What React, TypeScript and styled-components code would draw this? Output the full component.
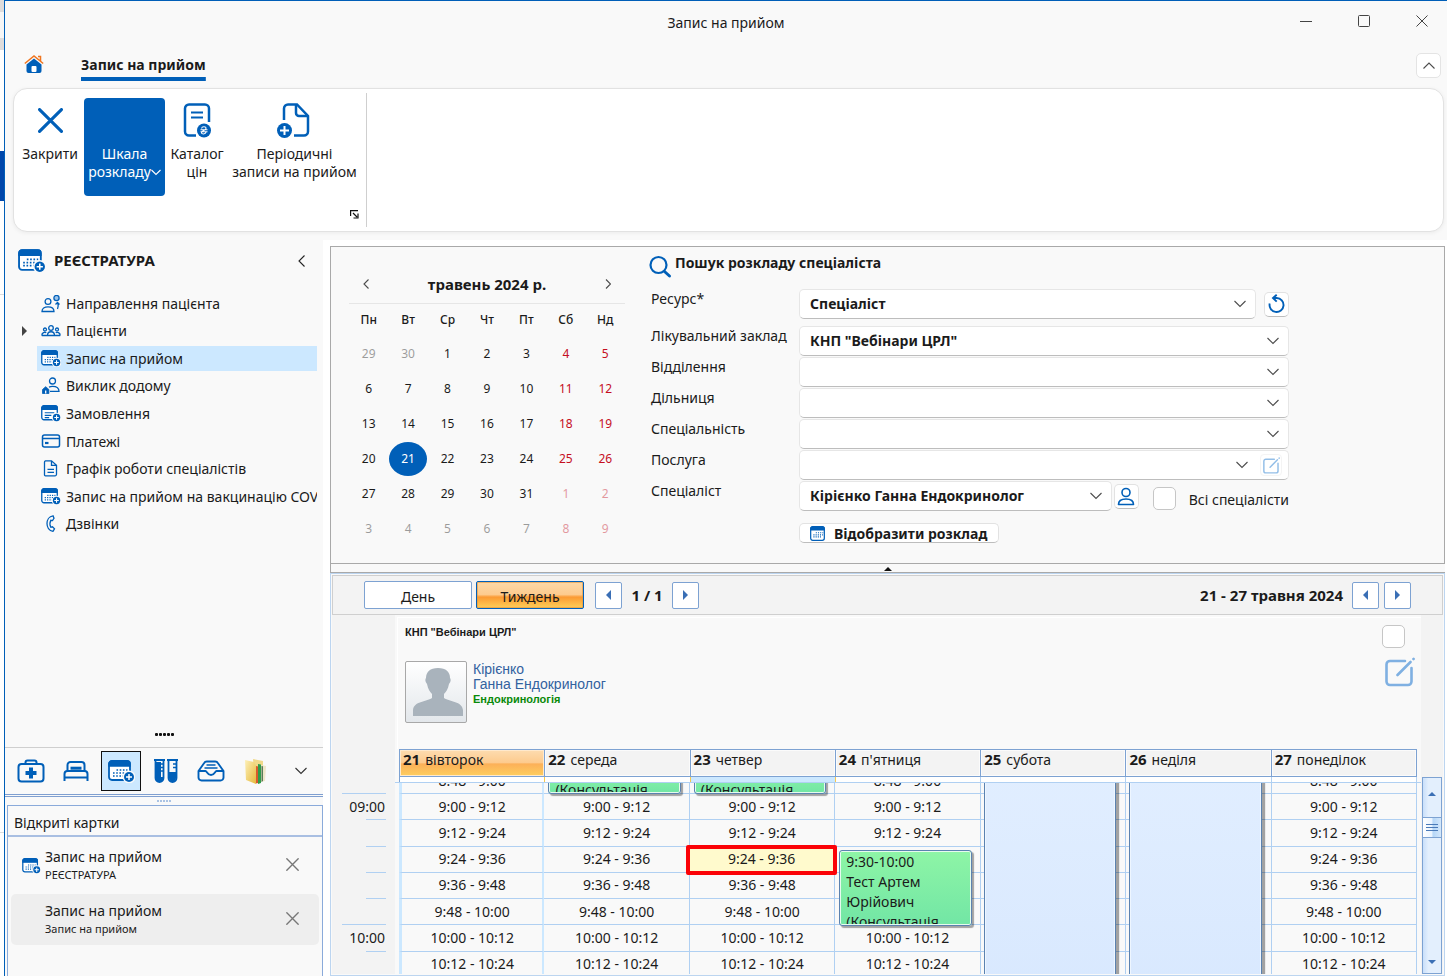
import React from 'react';
import styled, { createGlobalStyle, css } from 'styled-components';

const BLUE = '#005fb8';
const LINE = '#b0d0f2';
const EDGE = '#7da2d2';
const INK = '#1b1b1b';

const GlobalStyle = createGlobalStyle`
  * { box-sizing: border-box; }
  html, body, #root { height: 100%; }
  body {
    margin: 0;
    font-family: "Noto Sans", "Open Sans", sans-serif;
    font-size: 14px;
    line-height: 18px;
    color: ${INK};
    background: #fff;
    overflow: hidden;
  }
  button, select, input { font: inherit; color: inherit; margin: 0; }
  button { padding: 0; border: 0; background: none; cursor: pointer; }
  ul { list-style: none; margin: 0; padding: 0; }
  h1, h2, h3, p { margin: 0; font-size: inherit; font-weight: inherit; }
  table { border-spacing: 0; }
  th, td { padding: 0; }
  svg { display: block; flex: none; }
`;

/* ---------- shell ---------- */

const Desktop = styled.div`
  display: flex;
  height: 100vh;
  min-height: 900px;
`;

const DesktopEdge = styled.div`
  flex: none;
  width: 4px;
  background: linear-gradient(
    #dedcdc 0 12px, #f6f6f6 12px 38px, #dedcdc 38px 50px, #fff 50px 151px,
    #0047ab 151px 201px, #fff 201px 294px, #dcdcdc 294px 295px,
    #fff 295px 832px, #dcdcdc 832px 833px, #fff 833px
  );
`;

const Window = styled.div`
  flex: 1;
  min-width: 0;
  display: flex;
  flex-direction: column;
  background: #f9f9f9;
  border-left: 1px solid ${BLUE};
  border-top: 1px solid ${BLUE};
`;

const TitleBar = styled.header`
  flex: none;
  display: grid;
  grid-template-columns: 1fr auto 1fr;
  align-items: center;
  height: 42px;
`;

const WindowTitle = styled.h1`
  grid-column: 2;
  padding-top: 2px;
`;

const WindowControls = styled.div`
  display: flex;
  justify-content: flex-end;
  gap: 8px;
`;

const WindowButton = styled.button`
  display: grid;
  place-items: center;
  width: 50px;
  height: 34px;
  padding-bottom: 2px;
`;

const TabBar = styled.nav`
  flex: none;
  display: flex;
  align-items: center;
  height: 45px;
  padding: 0 6px 4px 19px;
`;

const Tab = styled.button`
  margin-left: 37px;
  margin-right: auto;
  padding: 9px 0 7px;
  font-weight: 700;
  background: linear-gradient(${BLUE}, ${BLUE}) bottom / 100% 4px no-repeat;
`;

const CollapseButton = styled.button`
  display: grid;
  place-items: center;
  width: 25px;
  height: 25px;
  margin-top: 4px;
  background: #fff;
  border: 1px solid #e4e4e4;
  border-radius: 5px;
`;

const Ribbon = styled.div`
  flex: none;
  display: flex;
  height: 144px;
  margin: 0 3px 0 8px;
  padding: 4px 6px;
  background: #fff;
  border: 1px solid #e2e2e2;
  border-radius: 14px;
  box-shadow: 0 1px 4px rgba(0, 0, 0, 0.06);
`;

const RibbonGroup = styled.div`
  display: flex;
  align-items: flex-start;
  padding: 5px 0 0;
  border-right: 1px solid #cfcfcf;
`;

const RibbonButton = styled.button<{ $width: number; $active?: boolean }>`
  display: flex;
  flex-direction: column;
  align-items: center;
  width: ${(p) => p.$width}px;
  height: 98px;
  padding-top: 2px;
  border-radius: 4px;
  text-align: center;
  ${(p) => p.$active && css`
    margin-left: 4px;
    background: ${BLUE};
    color: #fff;
  `}
`;

const RibbonIcon = styled.span`
  display: grid;
  place-items: center;
  height: 45px;
  padding-bottom: 4px;
`;

const RibbonLabel = styled.span`
  display: flex;
  align-items: center;
  white-space: nowrap;
`;

const Launcher = styled.button`
  align-self: flex-end;
  margin: 0 7px 8px -10px;
`;

const Body = styled.div`
  flex: 1;
  min-height: 0;
  display: flex;
  margin-top: 8px;
  background: #fff;
`;

/* ---------- sidebar ---------- */

const Sidebar = styled.aside`
  flex: none;
  display: flex;
  flex-direction: column;
  width: 318px;
  background: #f9f9f9;
`;

const SideHeader = styled.div`
  display: flex;
  align-items: center;
  height: 42px;
  padding: 0 18px 0 13px;
  gap: 8px;
`;

const SideTitle = styled.h2`
  flex: 1;
  padding-bottom: 3px;
  font-size: 15px;
  font-weight: 700;
`;

const SideList = styled.ul`
  display: grid;
  grid-template-columns: minmax(0, 1fr);
  grid-auto-rows: 1fr;
  height: 248px;
  margin-top: 8px;
`;

const SideItem = styled.li`
  display: flex;
  align-items: center;
  padding-right: 6px;
`;

const Expander = styled.span`
  display: flex;
  justify-content: center;
  flex: none;
  width: 32px;
  padding-right: 8px;
  padding-left: 15px;
`;

const SideLink = styled.a<{ $selected?: boolean }>`
  flex: 1;
  min-width: 0;
  display: flex;
  align-items: center;
  gap: 5px;
  height: 25px;
  padding-left: 4px;
  color: inherit;
  text-decoration: none;
  white-space: nowrap;
  overflow: hidden;
  background: ${(p) => (p.$selected ? '#cce8ff' : 'transparent')};
`;

const Dots = styled.div<{ $color: string; $size: number }>`
  display: flex;
  justify-content: center;
  gap: 1px;
  span {
    width: ${(p) => p.$size}px;
    height: ${(p) => p.$size}px;
    background: ${(p) => p.$color};
    border-radius: 1px;
  }
`;

const ModuleSplitter = styled.div`
  margin-top: auto;
  padding-bottom: 11px;
  border-bottom: 1px solid #cfcfcf;
`;

const ModuleBar = styled.div`
  flex: none;
  display: flex;
  align-items: center;
  gap: 5px;
  height: 46px;
  padding-left: 6px;
`;

const ModuleButton = styled.button<{ $selected?: boolean }>`
  display: grid;
  place-items: center;
  width: 40px;
  height: 40px;
  border: 1px solid ${(p) => (p.$selected ? '#111' : 'transparent')};
  background: ${(p) => (p.$selected ? '#cce8ff' : 'transparent')};
`;

const CardsSplitter = styled.div`
  flex: none;
  height: 11px;
  padding-top: 5px;
  border-top: 1px solid #7f9fd0;
  box-shadow: inset 0 1px 0 #f9f9f9, inset 0 2px 0 #7f9fd0;
`;

const Cards = styled.section`
  flex: none;
  height: 171px;
  margin: 0 0 0 2px;
  border: 1px solid #8aaada;
  border-bottom: 0;
`;

const CardsTitle = styled.h2`
  height: 31px;
  padding: 8px 6px 0;
  border-bottom: 2px solid #a9bfe2;
`;

const Card = styled.div<{ $active?: boolean }>`
  display: flex;
  align-items: center;
  height: 51px;
  margin: 3px;
  padding: 0 20px 0 11px;
  border-radius: 5px;
  background: ${(p) => (p.$active ? '#eeeeee' : 'transparent')};
`;

const CardIcon = styled.span`
  flex: none;
  width: 23px;
`;

const CardClose = styled.button`
  padding-bottom: 3px;
`;

const CardText = styled.span`
  flex: 1;
  display: flex;
  flex-direction: column;
  padding-top: 1px;
  small { font-size: 11px; }
`;

/* ---------- main ---------- */

const Main = styled.main`
  flex: 1;
  min-width: 0;
  display: flex;
  flex-direction: column;
  margin: 6px 2px 0 7px;
`;

const SearchPanel = styled.section`
  flex: none;
  display: flex;
  height: 318px;
  background: #f9f9f9;
  border: 1px solid #a9a9a9;
`;

const Calendar = styled.div`
  flex: none;
  width: 276px;
  margin: 24px 24px 0 18px;
`;

const CalendarHead = styled.div`
  display: flex;
  align-items: center;
  justify-content: space-between;
  height: 33px;
  padding: 0 14px 6px;
  border-bottom: 1px solid #e6e6e6;
  font-size: 15px;
  font-weight: 700;
`;

const CalendarTable = styled.table`
  width: 100%;
  table-layout: fixed;
  text-align: center;
  th { height: 32px; font-size: 12px; font-weight: 500; }
  td { height: 35px; }
`;

const DayButton = styled.button<{ $weekend: boolean; $faded: boolean; $selected: boolean }>`
  width: 38px;
  height: 34px;
  border-radius: 50%;
  font-size: 12px;
  color: ${(p) => (p.$weekend ? '#c50f1f' : INK)};
  ${(p) => p.$faded && css`opacity: 0.42;`}
  ${(p) => p.$selected && css`background: ${BLUE}; color: #fff;`}
`;

const Form = styled.form`
  flex: none;
  width: 640px;
`;

const FormTitle = styled.h2`
  display: flex;
  gap: 3px;
  height: 42px;
  padding-top: 8px;
  font-weight: 700;
`;

const FormTitleText = styled.span`
  height: 16px;
  line-height: 16px;
`;

const FieldRow = styled.div<{ $spaced?: boolean }>`
  display: flex;
  height: ${(p) => (p.$spaced ? 37 : 31)}px;
  padding-left: 2px;
`;

const FieldLabel = styled.label`
  flex: none;
  width: 148px;
  padding-top: 1px;
`;

const FieldBox = styled.div`
  display: flex;
  align-items: center;
  width: 490px;
  height: 30px;
`;

const SelectBox = styled.span`
  position: relative;
  flex: 1;
  height: 30px;
`;

const SelectInput = styled.select`
  appearance: none;
  display: block;
  width: 100%;
  height: 30px;
  padding: 0 30px 0 10px;
  font-weight: 700;
  background: #fff;
  border: 1px solid #e6e6e6;
  border-bottom: 1px solid #bdbdbd;
  border-radius: 5px;
`;

const SelectTools = styled.span`
  position: absolute;
  top: 4px;
  right: 7px;
  display: flex;
  align-items: center;
  gap: 12px;
  height: 22px;
  padding-right: 3px;
  pointer-events: none;
`;

const IconButton = styled.button<{ $gap?: number }>`
  display: grid;
  place-items: center;
  flex: none;
  width: 25px;
  height: 25px;
  margin-left: ${(p) => p.$gap ?? 0}px;
  background: #fff;
  border: 1px solid #e2e2e2;
  border-bottom-color: #bdbdbd;
  border-radius: 5px;
`;

const InnerEdit = styled.button`
  display: grid;
  place-items: center;
  width: 22px;
  height: 22px;
  margin-right: -3px;
  border: 1px solid #f4f4f4;
  border-radius: 4px;
`;

const Check = styled.input`
  appearance: none;
  flex: none;
  width: 23px;
  height: 23px;
  background: #fff;
  border: 1px solid #c6c6c6;
  border-radius: 5px;
  &:checked { background: ${BLUE}; }
`;

const CheckLabel = styled.label`
  display: flex;
  align-items: flex-start;
  gap: 13px;
  margin-left: 14px;
  padding-top: 4px;
  white-space: nowrap;
`;

const CheckText = styled.span`
  padding-top: 4px;
`;

const ShowButton = styled.button`
  display: flex;
  align-items: center;
  gap: 9px;
  height: 20px;
  width: 200px;
  margin: 11px 0 0 150px;
  padding: 1px 9px 0 10px;
  font-weight: 700;
  white-space: nowrap;
  background: #fff;
  border: 1px solid #e2e2e2;
  border-bottom-color: #bdbdbd;
  border-radius: 5px;
`;

const PanelSplitter = styled.button`
  flex: none;
  display: grid;
  place-items: center;
  height: 9px;
  background: #f9f9f9;
  border-left: 1px solid #a9a9a9;
  border-bottom: 1px solid #a9a9a9;
`;

const Schedule = styled.section`
  flex: 1;
  min-height: 0;
  display: flex;
  flex-direction: column;
  padding: 1px;
  border: 1px solid #bcd5f0;
  background: #f9f9f9;
`;

const ScheduleBar = styled.div`
  flex: none;
  display: flex;
  align-items: center;
  height: 40px;
  padding: 0 31px 0 31px;
  background: #f3f3f3;
  border: 1px solid #cfcfcf;
`;

const ViewButton = styled.button<{ $active?: boolean }>`
  width: 108px;
  height: 28px;
  margin-right: 4px;
  padding-top: 3px;
  background: #fff;
  border: 1px solid ${EDGE};
  border-radius: 2px;
  ${(p) => p.$active && css`
    border-color: ${BLUE};
    background: linear-gradient(#fcd9a8 0, #fdcb8e 48%, #fb9a33 58%, #fdc34f 90%, #fcc95e 100%);
    box-shadow: inset 0 0 0 1px rgba(226, 150, 60, 0.6);
  `}
`;

const ArrowButton = styled.button<{ $gap?: number }>`
  display: grid;
  place-items: center;
  width: 27px;
  height: 27px;
  margin-left: ${(p) => p.$gap ?? 0}px;
  background: #fff;
  border: 1px solid ${EDGE};
  border-radius: 2px;
`;

const PageInfo = styled.span`
  width: 50px;
  text-align: center;
  font-size: 15px;
  font-weight: 700;
`;

const RangeText = styled.span`
  margin-left: auto;
  font-size: 15px;
  font-weight: 700;
`;

const Area = styled.div`
  flex: 1;
  min-height: 0;
  display: flex;
`;

const Gutter = styled.div`
  flex: none;
  display: flex;
  flex-direction: column;
  width: 63px;
  background: #f3f3f3;
  padding-top: 168px;
`;

const Clip = styled.div`
  flex: 1;
  min-height: 0;
  overflow: hidden;
`;

const Ruler = styled.ol`
  display: grid;
  grid-template-rows: repeat(9, 1fr);
  height: 236px;
  margin: -15px 9px 0 10px;
  padding: 0;
  list-style: none;
`;

const Tick = styled.li<{ $major?: boolean }>`
  display: flex;
  align-items: center;
  justify-content: flex-end;
  padding-right: 1px;
  background: linear-gradient(${LINE}, ${LINE}) right bottom / ${(p) => (p.$major ? '44px' : '20px')} 1px no-repeat;
`;

const Content = styled.div`
  flex: 1;
  min-width: 0;
  display: flex;
  flex-direction: column;
`;

const Resource = styled.div`
  flex: none;
  display: flex;
  justify-content: space-between;
  height: 132px;
  margin: 2px 0 0 2px;
  padding: 7px 3px 0 7px;
  font-family: "Liberation Sans", Arial, sans-serif;
  border-top: 1px solid #fff;
  border-left: 1px solid #fff;
`;

const Clinic = styled.h3`
  font-size: 11px;
  line-height: 14px;
  font-weight: 700;
`;

const Person = styled.div`
  display: flex;
  gap: 6px;
  margin-top: 22px;
`;

const Avatar = styled.div`
  width: 62px;
  height: 62px;
  border: 1px solid #a8a8a8;
  border-radius: 2px;
  background: linear-gradient(#fff, #e3e7eb);
`;

const PersonText = styled.div`
  padding-top: 1px;
  font-size: 14px;
  line-height: 15px;
  color: #33629f;
  strong {
    display: block;
    font-size: 11px;
    color: #0a8a0a;
  }
`;

const ResourceTools = styled.div`
  display: flex;
  flex-direction: column;
  gap: 9px;
  align-items: flex-start;
  width: 36px;
`;

const ResourceEdit = styled.button`
  margin-left: 3px;
`;

const HeadTable = styled.table`
  flex: none;
  table-layout: fixed;
  width: calc(100% - 8px);
  margin: 0 4px;
  border-left: 1px solid ${EDGE};
`;

const HeadCell = styled.th<{ $today?: boolean }>`
  height: 28px;
  padding: 0 0 7px 3px;
  text-align: left;
  font-weight: 400;
  white-space: nowrap;
  border: 1px solid ${EDGE};
  border-left: 0;
  background: ${(p) => (p.$today
    ? 'linear-gradient(#fddcb0 0, #fdcb8e 48%, #fcb058 54%, #fdce60 100%)'
    : '#f3f3f3')};
  box-shadow: inset 0 0 0 1px ${(p) => (p.$today ? '#ffe9cc' : '#fbfbfb')};
  b { margin-right: 5px; font-size: 15px; }
`;

const AllDay = styled.td<{ $mark?: boolean; $fill?: boolean }>`
  height: 5px;
  border-right: 1px solid ${(p) => (p.$mark ? '#f7c84e' : LINE)};
  background: ${(p) => (p.$fill ? '#cce8ff' : '#fff')};
`;

const SlotClip = styled(Clip)`
  border-top: 1px solid ${LINE};
`;

const SlotTable = styled.table`
  table-layout: fixed;
  width: calc(100% - 8px);
  height: 236px;
  margin: -15px 4px 0;
`;

const Slot = styled.td<{ $day: number }>`
  position: relative;
  text-align: center;
  border-bottom: 1px solid ${LINE};
  border-right: 1px solid ${LINE};
  ${(p) => p.$day === 0 && css`
    border-left: 3px solid #cce8ff;
    border-right: 2px solid #cce8ff;
  `}
`;

const Event = styled.div<{ $top: number; $height: number; $pad?: number }>`
  position: absolute;
  z-index: 1;
  top: ${(p) => p.$top}px;
  left: 4px;
  right: 8px;
  height: ${(p) => p.$height}px;
  padding: ${(p) => p.$pad ?? 1}px 0 1px 6px;
  text-align: left;
  line-height: 20px;
  border: 1px solid #5b82b0;
  border-radius: 3px;
  background: linear-gradient(#8ef5a6, #72e6a5);
  box-shadow: inset 0 0 0 1px #e6fbee, 2px 2px 1px rgba(0, 0, 0, 0.35);
`;

const EventText = styled.div`
  height: 100%;
  overflow: hidden;
`;

const Busy = styled.div`
  position: absolute;
  z-index: 1;
  top: 0;
  left: 3px;
  right: 9px;
  height: 236px;
  border: 1px solid #5b82b0;
  background: linear-gradient(#e1eeff, #d8e8fe);
  box-shadow: inset 0 0 0 1px #eef6ff, 3px 2px 1px rgba(0, 0, 0, 0.35);
`;

const Marked = styled.div`
  position: absolute;
  z-index: 2;
  inset: -2px -3px -3px -4px;
  display: grid;
  place-items: center;
  padding-bottom: 1px;
  border: 4px solid #fb0207;
  border-radius: 2px;
  background: #fffacd;
`;

const ScrollColumn = styled.div`
  flex: none;
  width: 22px;
  padding: 162px 1px 0 1px;
  display: flex;
  background: #f3f3f3;
`;

const ScrollTrack = styled.div`
  flex: 1;
  display: flex;
  flex-direction: column;
  align-items: center;
  border: 1px solid ${EDGE};
  background: linear-gradient(90deg, #c9dffa, #e3effd 30%);
`;

const ScrollArrow = styled.button<{ $down?: boolean }>`
  flex: none;
  display: flex;
  align-items: center;
  justify-content: center;
  width: 100%;
  height: ${(p) => (p.$down ? 22 : 39)}px;
  padding-bottom: ${(p) => (p.$down ? 0 : 9)}px;
  margin-top: ${(p) => (p.$down ? 'auto' : 0)};
`;

const ScrollThumb = styled.div`
  flex: none;
  display: grid;
  place-items: center;
  width: 100%;
  height: 21px;
  border: solid ${EDGE};
  border-width: 1px 0;
  background: linear-gradient(90deg, #fff, #eaf4ff 50%, #b5d6f7 55%, #d3e7fb);
`;

/* ---------- icons ---------- */

const Plus = ({ x, y, r }: { x: number; y: number; r: number }) => (
  <g>
    <circle cx={x} cy={y} r={r + 1.5} fill="#f9f9f9" />
    <circle cx={x} cy={y} r={r} fill={BLUE} />
    <path d={`M${x - r * 0.6} ${y}h${r * 1.2}M${x} ${y - r * 0.6}v${r * 1.2}`} stroke="#fff" strokeWidth="1.5" />
  </g>
);

const CalendarIcon = ({ size, plain, lines }: { size: number; plain?: boolean; lines?: boolean }) => (
  <svg width={size} height={plain ? size : Math.round(size * 0.86)} viewBox={plain ? '0 0 22 22' : '0 0 27 23'} fill="none">
    <rect x="1" y="1" width={plain ? 20 : 21} height={plain ? 20 : 19} rx="3" stroke={BLUE} strokeWidth="1.8" fill="#fff" />
    <path d={plain ? 'M1 6V4a3 3 0 0 1 3-3h14a3 3 0 0 1 3 3v2z' : 'M1 6V4a3 3 0 0 1 3-3h15a3 3 0 0 1 3 3v2z'} fill={BLUE} stroke={BLUE} strokeWidth="1.5" />
    {lines ? (
      <path d="M5 10.500h13M5 14h9M5 17h6" stroke={BLUE} strokeWidth="1.600" />
    ) : (
      <path d="M8.500 10h11M5 13h14M5 16h11" stroke={BLUE} strokeWidth="1.600" strokeDasharray="1.600 1.600" />
    )}
    {!plain && <Plus x={21} y={17} r={5} />}
  </svg>
);

const Chevron = ({ dir = 'down', w = 12, color = '#4c4c4c' }: { dir?: 'down' | 'up' | 'left' | 'right'; w?: number; color?: string }) => {
  const d = {
    down: `M.5 1l${w / 2 - 0.5} ${w / 2 - 0.5}L${w - 0.5} 1`,
    up: `M.5 ${w / 2 + 0.5}L${w / 2} 1l${w / 2 - 0.5} ${w / 2 - 0.5}`,
    left: `M${w / 2 + 0.5} .5L1 ${w / 2}l${w / 2 - 0.5} ${w / 2 - 0.5}`,
    right: `M1 .5l${w / 2 - 0.5} ${w / 2 - 0.5}L1 ${w - 0.5}`,
  }[dir];
  const wide = dir === 'down' || dir === 'up';
  return (
    <svg width={wide ? w : w / 2 + 1} height={wide ? w / 2 + 2 : w} fill="none" stroke={color} strokeWidth="1.1">
      <path d={d} />
    </svg>
  );
};

const Triangle = ({ dir, color = '#3a6fb5' }: { dir: 'left' | 'right' | 'up' | 'down'; color?: string }) => {
  const d = { left: 'M6 0v10L1 5z', right: 'M1 0v10l5-5z', up: 'M0 5l4-4 4 4z', down: 'M0 0h8L4 4z' }[dir];
  const tall = dir === 'left' || dir === 'right';
  return (
    <svg width={tall ? 7 : 8} height={tall ? 10 : 5} fill={color}>
      <path d={d} />
    </svg>
  );
};

const CloseIcon = ({ size, width, color }: { size: number; width: number; color: string }) => (
  <svg width={size} height={size} viewBox="0 0 24 24" fill="none" stroke={color} strokeWidth={width} strokeLinecap="round">
    <path d="M1.500 1.500l21 21M22.500 1.500l-21 21" />
  </svg>
);

const HomeIcon = () => (
  <svg width="20" height="18" viewBox="0 0 20 18" fill="none">
    <path d="M2.500 9.500L10 3.500l7.500 6V16a2 2 0 0 1-2 2h-11a2 2 0 0 1-2-2z" fill={BLUE} />
    <rect x="7.500" y="11" width="5" height="6" rx="1" fill="#fff" />
    <path d="M.8 8.500L10 1l9.200 7.500M14 1.500h2.500V6" stroke="#f0751f" strokeWidth="1.500" />
  </svg>
);

const CatalogIcon = () => (
  <svg width="30" height="35" viewBox="0 0 30 35" fill="none" stroke={BLUE}>
    <path d="M14 32.500H7a4 4 0 0 1-4-4v-23a4 4 0 0 1 4-4h16a4 4 0 0 1 4 4V19" strokeWidth="2.500" />
    <path d="M9 9.500h12M9 14.500h12" strokeWidth="2" />
    <circle cx="22" cy="27.500" r="7" fill={BLUE} stroke="none" />
    <path d="M19.500 25.500c.5-2.500 4.700-2.300 4.500 0-.2 2-4.500 2-4.500 4 0 2 4 2 4.500-.3M18.500 26.700h7M18.500 28.700h7" stroke="#fff" strokeWidth="1.100" />
  </svg>
);

const PeriodicIcon = () => (
  <svg width="38" height="36" viewBox="0 0 38 36" fill="none" stroke={BLUE} strokeWidth="2.500">
    <path d="M8 17V5.500a4 4 0 0 1 4-4h9L32 13v15.500a4 4 0 0 1-4 4H18" />
    <path d="M20 2v8a3 3 0 0 0 3 3h8.500" />
    <circle cx="8.500" cy="27.500" r="7.500" fill={BLUE} stroke="none" />
    <path d="M4 27.500h9M8.500 23v9" stroke="#fff" strokeWidth="2" />
  </svg>
);

const LauncherIcon = () => (
  <svg width="9" height="9" fill="none" stroke="#111" strokeWidth="1.200">
    <path d="M.6 6V.6H8M3 3l4 4M8 3.500V8H3.500" />
  </svg>
);

const SmallIcon = ({ children }: { children: React.ReactNode }) => (
  <svg width="20" height="18" viewBox="0 0 20 18" fill="none" stroke={BLUE} strokeWidth="1.300">
    {children}
  </svg>
);

const ReferralIcon = () => (
  <SmallIcon>
    <circle cx="7" cy="6.500" r="2.900" />
    <path d="M1 16.500c0-3 2.500-4.700 6-4.700s6 1.700 6 4.700zM16.500 14c1-2 1-3.500.3-6M14.500 9.500l2-2 2 2" />
    <circle cx="15.500" cy="3" r="2.600" fill="#9cc4ea" />
  </SmallIcon>
);

const GroupIcon = () => (
  <SmallIcon>
    <circle cx="10" cy="6" r="2.300" />
    <circle cx="4" cy="7.500" r="1.500" />
    <circle cx="16" cy="7.500" r="1.500" />
    <path d="M6.500 13.500c0-5 7-5 7 0zM.8 13.500c0-3 3-3.800 4.500-2.700M.8 13.500h18.400M19.200 13.500c0-3-3-3.800-4.500-2.700" />
  </SmallIcon>
);

const HomeVisitIcon = () => (
  <SmallIcon>
    <circle cx="11.500" cy="4" r="3" />
    <path d="M9 14.300h9c0-3.500-3-5-6.500-5-1.500 0-2.500.3-3.500.8" />
    <path d="M1.500 12.500l3.200-2.800 3.200 2.800V16.500H1.500z" fill={BLUE} strokeWidth=".8" />
    <path d="M4.700 13.500v3" stroke="#fff" />
  </SmallIcon>
);

const CardPayIcon = () => (
  <SmallIcon>
    <rect x="1.500" y="2" width="17" height="12" rx="2" strokeWidth="1.500" />
    <path d="M1.500 5.500h17" strokeWidth="1.500" />
    <path d="M4 10h3.500" strokeWidth="2.200" />
  </SmallIcon>
);

const DocIcon = () => (
  <SmallIcon>
    <path d="M4.500 .8h6l5 4.500v9a1.500 1.500 0 0 1-1.500 1.500H4.500A1 1 0 0 1 3.500 14.500V2.300a1.500 1.500 0 0 1 1-1.500zM10.500 .8V5.300h5M6.500 9.300h6.500M6.500 12.300h6.500" />
  </SmallIcon>
);

const PhoneIcon = () => (
  <SmallIcon>
    <path d="M12 .8c-8 1-8 14.500 0 15.500l1.500-2.500-2-2-1.700.5c-1-2-1-5 0-7l1.700.3L13 3.300z" />
  </SmallIcon>
);

const MedkitIcon = () => (
  <svg width="28" height="24" viewBox="0 0 28 24" fill="none" stroke={BLUE} strokeWidth="2">
    <rect x="1.500" y="5" width="25" height="17.500" rx="3" />
    <path d="M8.500 5V3.500a2 2 0 0 1 2-2h7a2 2 0 0 1 2 2V5" />
    <path d="M14 8.500v11M8.500 14h11" strokeWidth="4" />
  </svg>
);

const BedIcon = () => (
  <svg width="26" height="22" viewBox="0 0 26 22" fill="none" stroke={BLUE} strokeWidth="2">
    <path d="M1.500 21v-7a3 3 0 0 1 3-3h17a3 3 0 0 1 3 3v7M1.500 17.500h23" />
    <path d="M4.500 11V5a3 3 0 0 1 3-3h11a3 3 0 0 1 3 3v6" />
    <path d="M7.500 8.200h11" strokeWidth="3" />
  </svg>
);

const TubesIcon = () => (
  <svg width="26" height="26" viewBox="0 0 26 26" fill="none" stroke={BLUE} strokeWidth="1.800">
    <path d="M1 2h11M2.500 2v18a4 4 0 0 0 8 0V2M14 2h11M15.500 2v18a4 4 0 0 0 8 0V2" />
    <path d="M3 4h5v18H5l-2-2zM16 14h7v6a3.500 3.500 0 0 1-7 0z" fill={BLUE} stroke="none" />
    <path d="M10 6H7M10 9.500H7M10 13H7M23 6h-3M23 9.500h-3" strokeWidth="1.500" />
    <path d="M3 21h7" strokeWidth="4" />
  </svg>
);

const InboxIcon = () => (
  <svg width="28" height="22" viewBox="0 0 28 22" fill="none" stroke={BLUE} strokeWidth="1.900">
    <path d="M1.500 11L7 3.200A3.500 3.500 0 0 1 9.800 1.500h8.400A3.500 3.500 0 0 1 21 3.200L26.500 11v6.500a3 3 0 0 1-3 3h-19a3 3 0 0 1-3-3zM1.500 11h7c1.500 0 1.500 4 5.500 4s4-4 5.500-4h7" />
    <path d="M9.500 5h9M7.500 8h13" strokeWidth="1.500" />
  </svg>
);

const FolderIcon = () => (
  <svg width="24" height="27" viewBox="0 0 24 27">
    <defs>
      <linearGradient id="folder" x1="0" y1="0" x2="1" y2="1">
        <stop offset="0" stopColor="#fdf0b8" />
        <stop offset="1" stopColor="#e6b93c" />
      </linearGradient>
    </defs>
    <path d="M9 1l10 2v20l-8 1z" fill="#f0d98a" />
    <path d="M17 7l5 1-1 15-5 1z" fill="#eee6c8" />
    <path d="M14 6l3 .5V25l-3 1z" fill="#2f9c4a" />
    <path d="M12 8l2 .5V25l-2 .5z" fill="#d85a2c" />
    <path d="M17.500 8l1.500.3V23l-1.500 1z" fill="#5a7a5a" />
    <path d="M1 2l9 2 2 4v18l-10-4z" fill="url(#folder)" />
  </svg>
);

const SearchIcon = () => (
  <svg width="23" height="24" viewBox="0 0 23 24" fill="none" stroke={BLUE}>
    <circle cx="9.500" cy="10" r="8" strokeWidth="2.200" />
    <path d="M15.500 16.500l5 4.500" strokeWidth="3" strokeLinecap="round" />
  </svg>
);

const ResetIcon = () => (
  <svg width="18" height="20" viewBox="0 0 18 20" fill="none" stroke={BLUE} strokeWidth="1.900">
    <path d="M1.700 9.500a7 7 0 1 0 7-5.500H5.500" />
    <path d="M8.700 .8L5 4l3.700 3.600" />
  </svg>
);

const UserIcon = () => (
  <svg width="18" height="19" viewBox="0 0 18 19" fill="none" stroke={BLUE} strokeWidth="1.600">
    <circle cx="9" cy="5.500" r="4" />
    <path d="M1.500 17.500c0-4 3-5.500 7.500-5.500s7.500 1.500 7.500 5.500z" strokeLinejoin="round" />
  </svg>
);

const EditIcon = ({ size, color }: { size: number; color: string }) => (
  <svg width={size} height={size} viewBox="0 0 30 30" fill="none" stroke={color} strokeWidth="2.600" strokeLinecap="round">
    <path d="M20 4H5a3.500 3.500 0 0 0-3.500 3.500v17A3.500 3.500 0 0 0 5 28h18a3.500 3.500 0 0 0 3.500-3.500V11" />
    <path d="M12.500 18L25.500 5M28.500 2l.1-.1" />
  </svg>
);

const Silhouette = () => (
  <svg width="60" height="60" viewBox="0 0 60 60" fill="#a9b3bc">
    <path d="M32 6c8 0 12 4 12 10 1 1 1 4-1 6-1 5-3 8-5 10v4c6 4 18 3 19 12v6H7v-6c1-9 13-8 19-12v-4c-2-2-4-5-5-10-2-2-2-5-1-6 0-6 4-10 12-10z" />
  </svg>
);

/* ---------- data ---------- */

const NAV = [
  { text: 'Направлення пацієнта', icon: <ReferralIcon /> },
  { text: 'Пацієнти', icon: <GroupIcon />, expandable: true },
  { text: 'Запис на прийом', icon: <CalendarIcon size={20} />, selected: true },
  { text: 'Виклик додому', icon: <HomeVisitIcon /> },
  { text: 'Замовлення', icon: <CalendarIcon size={20} lines /> },
  { text: 'Платежі', icon: <CardPayIcon /> },
  { text: 'Графік роботи спеціалістів', icon: <DocIcon /> },
  { text: 'Запис на прийом на вакцинацію COVID', icon: <CalendarIcon size={20} /> },
  { text: 'Дзвінки', icon: <PhoneIcon /> },
];

const MODULES = [
  { name: 'Медична допомога', icon: <MedkitIcon /> },
  { name: 'Стаціонар', icon: <BedIcon /> },
  { name: 'Реєстратура', icon: <CalendarIcon size={27} />, selected: true },
  { name: 'Лабораторія', icon: <TubesIcon /> },
  { name: 'Архів', icon: <InboxIcon /> },
  { name: 'Документи', icon: <FolderIcon /> },
  { name: 'Інші модулі', icon: <Chevron color="#333" /> },
];

const WEEKDAYS = ['Пн', 'Вт', 'Ср', 'Чт', 'Пт', 'Сб', 'Нд'];
const WEEKS = Array.from({ length: 6 }, (_, w) =>
  Array.from({ length: 7 }, (_, d) => {
    const n = w * 7 + d - 1;
    if (n < 1) return { day: n + 30, faded: true };
    if (n > 31) return { day: n - 31, faded: true };
    return { day: n, faded: false };
  }),
);

const DAYS = ['вівторок', 'середа', 'четвер', "п'ятниця", 'субота', 'неділя', 'понеділок'];
const SLOTS = [
  '8:48 - 9:00', '9:00 - 9:12', '9:12 - 9:24', '9:24 - 9:36', '9:36 - 9:48',
  '9:48 - 10:00', '10:00 - 10:12', '10:12 - 10:24', '10:24 - 10:36',
];
const FIELDS = [
  { id: 'clinic', label: 'Лікувальний заклад', value: 'КНП "Вебінари ЦРЛ"' },
  { id: 'department', label: 'Відділення', value: '' },
  { id: 'district', label: 'Дільниця', value: '' },
  { id: 'speciality', label: 'Спеціальність', value: '' },
];

/* ---------- pieces ---------- */

const Select = ({ id, value, edit }: { id: string; value: string; edit?: boolean }) => (
  <SelectBox>
    <SelectInput id={id} defaultValue={value}>
      <option value={value}>{value}</option>
    </SelectInput>
    <SelectTools>
      <Chevron />
      {edit && (
        <InnerEdit type="button" aria-label="Редагувати послугу">
          <EditIcon size={17} color="#94bfe8" />
        </InnerEdit>
      )}
    </SelectTools>
  </SelectBox>
);

const FiveDots = ({ color, size }: { color: string; size: number }) => (
  <Dots $color={color} $size={size}>
    <span /><span /><span /><span /><span />
  </Dots>
);

const SlotCell = ({ row, day }: { row: number; day: number }) => {
  const busy = day === 4 || day === 5;
  const booked = (row === 0 && (day === 1 || day === 2)) || (day === 3 && row > 2 && row < 6);
  const marked = day === 2 && row === 3;
  return (
    <Slot $day={day}>
      {!busy && !booked && !marked && SLOTS[row]}
      {busy && row === 0 && <Busy />}
      {booked && row === 0 && (
        <Event $top={0} $height={26} $pad={11}><EventText>(Консультація</EventText></Event>
      )}
      {day === 3 && row === 3 && (
        <Event $top={3} $height={76}>
          <EventText>9:30-10:00<br />Тест Артем<br />Юрійович<br />(Консультація</EventText>
        </Event>
      )}
      {marked && <Marked>{SLOTS[row]}</Marked>}
    </Slot>
  );
};

export default function App() {
  return (
    <Desktop>
      <GlobalStyle />
      <DesktopEdge />
      <Window>
        <TitleBar>
          <WindowTitle>Запис на прийом</WindowTitle>
          <WindowControls>
            <WindowButton aria-label="Згорнути">
              <svg width="12" height="12" stroke="#444"><path d="M0 6.500h12" /></svg>
            </WindowButton>
            <WindowButton aria-label="Розгорнути">
              <svg width="12" height="12" fill="none" stroke="#444"><rect x=".5" y=".5" width="11" height="11" rx="1" /></svg>
            </WindowButton>
            <WindowButton aria-label="Закрити вікно"><CloseIcon size={12} width={2} color="#444" /></WindowButton>
          </WindowControls>
        </TitleBar>

        <TabBar>
          <button aria-label="Головна"><HomeIcon /></button>
          <Tab>Запис на прийом</Tab>
          <CollapseButton aria-label="Згорнути стрічку"><Chevron dir="up" /></CollapseButton>
        </TabBar>

        <Ribbon>
          <RibbonGroup>
            <RibbonButton $width={60}>
              <RibbonIcon><CloseIcon size={25} width={3} color={BLUE} /></RibbonIcon>
              <RibbonLabel>Закрити</RibbonLabel>
            </RibbonButton>
            <RibbonButton $width={81} $active>
              <RibbonIcon />
              <RibbonLabel>Шкала</RibbonLabel>
              <RibbonLabel>розкладу<Chevron w={10} color="#fff" /></RibbonLabel>
            </RibbonButton>
            <RibbonButton $width={64}>
              <RibbonIcon><CatalogIcon /></RibbonIcon>
              <RibbonLabel>Каталог</RibbonLabel>
              <RibbonLabel>цін</RibbonLabel>
            </RibbonButton>
            <RibbonButton $width={131}>
              <RibbonIcon><PeriodicIcon /></RibbonIcon>
              <RibbonLabel>Періодичні</RibbonLabel>
              <RibbonLabel>записи на прийом</RibbonLabel>
            </RibbonButton>
            <Launcher aria-label="Параметри групи"><LauncherIcon /></Launcher>
          </RibbonGroup>
        </Ribbon>

        <Body>
          <Sidebar>
            <SideHeader>
              <CalendarIcon size={28} />
              <SideTitle>РЕЄСТРАТУРА</SideTitle>
              <button aria-label="Згорнути панель"><Chevron dir="left" color="#222" /></button>
            </SideHeader>
            <SideList>
              {NAV.map((item) => (
                <SideItem key={item.text}>
                  <Expander>{item.expandable && <Triangle dir="right" color="#444" />}</Expander>
                  <SideLink href="#" $selected={item.selected}>
                    {item.icon}
                    {item.text}
                  </SideLink>
                </SideItem>
              ))}
            </SideList>
            <ModuleSplitter><FiveDots color="#111" size={3} /></ModuleSplitter>
            <ModuleBar>
              {MODULES.map((m) => (
                <ModuleButton key={m.name} aria-label={m.name} $selected={m.selected}>{m.icon}</ModuleButton>
              ))}
            </ModuleBar>
            <CardsSplitter><FiveDots color="#8fb0dc" size={2} /></CardsSplitter>
            <Cards>
              <CardsTitle>Відкриті картки</CardsTitle>
              <Card>
                <CardIcon><CalendarIcon size={19} /></CardIcon>
                <CardText>Запис на прийом<small>РЕЄСТРАТУРА</small></CardText>
                <CardClose aria-label="Закрити картку"><CloseIcon size={13} width={2.5} color="#777" /></CardClose>
              </Card>
              <Card $active>
                <CardIcon />
                <CardText>Запис на прийом<small>Запис на прийом</small></CardText>
                <CardClose aria-label="Закрити картку"><CloseIcon size={13} width={2.5} color="#777" /></CardClose>
              </Card>
            </Cards>
          </Sidebar>

          <Main>
            <SearchPanel>
              <Calendar>
                <CalendarHead>
                  <button aria-label="Попередній місяць"><Chevron dir="left" w={10} /></button>
                  <span>травень 2024 р.</span>
                  <button aria-label="Наступний місяць"><Chevron dir="right" w={10} /></button>
                </CalendarHead>
                <CalendarTable>
                  <thead>
                    <tr>{WEEKDAYS.map((d) => <th key={d}>{d}</th>)}</tr>
                  </thead>
                  <tbody>
                    {WEEKS.map((week, w) => (
                      <tr key={w}>
                        {week.map((c, d) => (
                          <td key={d}>
                            <DayButton $weekend={d > 4} $faded={c.faded} $selected={!c.faded && c.day === 21}>{c.day}</DayButton>
                          </td>
                        ))}
                      </tr>
                    ))}
                  </tbody>
                </CalendarTable>
              </Calendar>

              <Form>
                <FormTitle><SearchIcon /><FormTitleText>Пошук розкладу спеціаліста</FormTitleText></FormTitle>
                <FieldRow $spaced>
                  <FieldLabel htmlFor="resource">Ресурс*</FieldLabel>
                  <FieldBox>
                    <Select id="resource" value="Спеціаліст" />
                    <IconButton type="button" aria-label="Скинути" $gap={8}><ResetIcon /></IconButton>
                  </FieldBox>
                </FieldRow>
                {FIELDS.map((f) => (
                  <FieldRow key={f.id}>
                    <FieldLabel htmlFor={f.id}>{f.label}</FieldLabel>
                    <FieldBox><Select id={f.id} value={f.value} /></FieldBox>
                  </FieldRow>
                ))}
                <FieldRow>
                  <FieldLabel htmlFor="service">Послуга</FieldLabel>
                  <FieldBox><Select id="service" value="" edit /></FieldBox>
                </FieldRow>
                <FieldRow>
                  <FieldLabel htmlFor="specialist">Спеціаліст</FieldLabel>
                  <FieldBox>
                    <Select id="specialist" value="Кірієнко Ганна Ендокринолог" />
                    <IconButton type="button" aria-label="Картка спеціаліста" $gap={2}><UserIcon /></IconButton>
                    <CheckLabel><Check type="checkbox" /><CheckText>Всі спеціалісти</CheckText></CheckLabel>
                  </FieldBox>
                </FieldRow>
                <ShowButton type="button"><CalendarIcon size={15} plain />Відобразити розклад</ShowButton>
              </Form>
            </SearchPanel>
            <PanelSplitter aria-label="Згорнути пошук"><Triangle dir="up" color="#111" /></PanelSplitter>

            <Schedule>
              <ScheduleBar>
                <ViewButton>День</ViewButton>
                <ViewButton $active>Тиждень</ViewButton>
                <ArrowButton aria-label="Попередня сторінка" $gap={7}><Triangle dir="left" /></ArrowButton>
                <PageInfo>1 / 1</PageInfo>
                <ArrowButton aria-label="Наступна сторінка"><Triangle dir="right" /></ArrowButton>
                <RangeText>21 - 27 травня 2024</RangeText>
                <ArrowButton aria-label="Попередній тиждень" $gap={9}><Triangle dir="left" /></ArrowButton>
                <ArrowButton aria-label="Наступний тиждень" $gap={5}><Triangle dir="right" /></ArrowButton>
              </ScheduleBar>
              <Area>
                <Gutter>
                  <Clip>
                    <Ruler>
                      {SLOTS.map((s, i) => (
                        <Tick key={s} $major={i === 0 || i === 5}>
                          {i === 1 && '09:00'}
                          {i === 6 && '10:00'}
                        </Tick>
                      ))}
                    </Ruler>
                  </Clip>
                </Gutter>
                <Content>
                  <Resource>
                    <div>
                      <Clinic>КНП "Вебінари ЦРЛ"</Clinic>
                      <Person>
                        <Avatar><Silhouette /></Avatar>
                        <PersonText>
                          <p>Кірієнко</p>
                          <p>Ганна Ендокринолог</p>
                          <strong>Ендокринологія</strong>
                        </PersonText>
                      </Person>
                    </div>
                    <ResourceTools>
                      <Check type="checkbox" aria-label="Вибрати спеціаліста" />
                      <ResourceEdit aria-label="Редагувати розклад"><EditIcon size={30} color="#7fb0e2" /></ResourceEdit>
                    </ResourceTools>
                  </Resource>
                  <HeadTable>
                    <thead>
                      <tr>
                        {DAYS.map((d, i) => (
                          <HeadCell key={d} $today={i === 0}><b>{21 + i}</b>{d}</HeadCell>
                        ))}
                      </tr>
                    </thead>
                    <tbody>
                      <tr>
                        {DAYS.map((d, i) => <AllDay key={d} $mark={i < 3} $fill={i === 2} />)}
                      </tr>
                    </tbody>
                  </HeadTable>
                  <SlotClip>
                    <SlotTable>
                      <tbody>
                        {SLOTS.map((s, row) => (
                          <tr key={s}>
                            {DAYS.map((d, day) => <SlotCell key={d} row={row} day={day} />)}
                          </tr>
                        ))}
                      </tbody>
                    </SlotTable>
                  </SlotClip>
                </Content>
                <ScrollColumn>
                  <ScrollTrack>
                    <ScrollArrow aria-label="Вгору"><Triangle dir="up" /></ScrollArrow>
                    <ScrollThumb>
                      <svg width="12" height="8" stroke="#4a7ab8"><path d="M0 .5h12M0 3.500h12M0 6.500h12" /></svg>
                    </ScrollThumb>
                    <ScrollArrow aria-label="Вниз" $down><Triangle dir="down" /></ScrollArrow>
                  </ScrollTrack>
                </ScrollColumn>
              </Area>
            </Schedule>
          </Main>
        </Body>
      </Window>
    </Desktop>
  );
}
